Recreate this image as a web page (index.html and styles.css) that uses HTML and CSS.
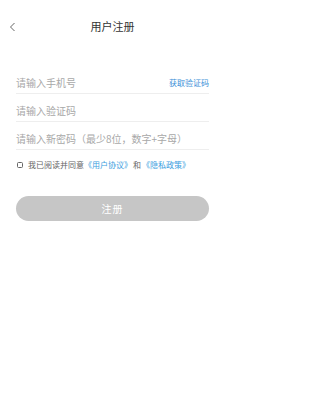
FILE: index.html
```html
<!DOCTYPE html>
<html lang="zh">
<head>
<meta charset="utf-8">
<title>用户注册</title>
<link rel="stylesheet" href="styles.css">
</head>
<body>
<div class="page">
  <header class="header">
    <svg class="back" width="8" height="10" viewBox="0 0 8 10"><polyline points="5.5,1 1.5,5 5.5,9" fill="none" stroke="#666" stroke-width="1"/></svg>
    <div class="title">用户注册</div>
  </header>
  <div class="form">
    <div class="row">
      <span class="ph">请输入手机号</span>
      <span class="code">获取验证码</span>
    </div>
    <div class="row"><span class="ph">请输入验证码</span></div>
    <div class="row"><span class="ph">请输入新密码（最少8位，数字+字母）</span></div>
    <div class="agree">
      <span class="box"></span>
      <span>我已阅读并同意</span><span class="link">《用户协议》</span><span class="and">和</span><span class="link">《隐私政策》</span>
    </div>
    <button class="btn">注册</button>
  </div>
</div>
</body>
</html>
```
FILE: styles.css
```css
* { box-sizing: border-box; }
html, body { margin: 0; padding: 0; background: #fff; }
body { font-family: "Noto Sans CJK SC", "Noto Sans", sans-serif; }
.page { width: 225px; height: 400px; }
.header { position: relative; height: 50px; display: flex; align-items: center; justify-content: center; }
.back { position: absolute; left: 9px; top: 22px; }
.title { font-size: 11px; color: #333; line-height: 14px; margin-top: 1px; }
.form { padding: 16px 16px 0; }
.row { display: flex; justify-content: space-between; align-items: center; height: 28px; padding: 9px 0 3px; border-bottom: 1px solid #eeeeee; }
.ph { font-size: 10px; line-height: 14px; color: #a8a8a8; }
.code { font-size: 8px; line-height: 12px; color: #3b8fd8; }
.agree { display: flex; align-items: center; margin-top: 9px; font-size: 8px; line-height: 12px; color: #666; padding-left: 1px; }
.box { width: 6px; height: 6px; border: 1px solid #666; border-radius: 1.5px; margin-right: 5px; }
.link { color: #3a9de0; }
.and { margin: 0 1px; }
.btn { display: block; width: 100%; height: 25px; margin-top: 25px; border: none; border-radius: 13px; background: #c6c6c6; color: #fff; font-family: inherit; font-size: 10px; padding: 0; letter-spacing: 1px; }
```
